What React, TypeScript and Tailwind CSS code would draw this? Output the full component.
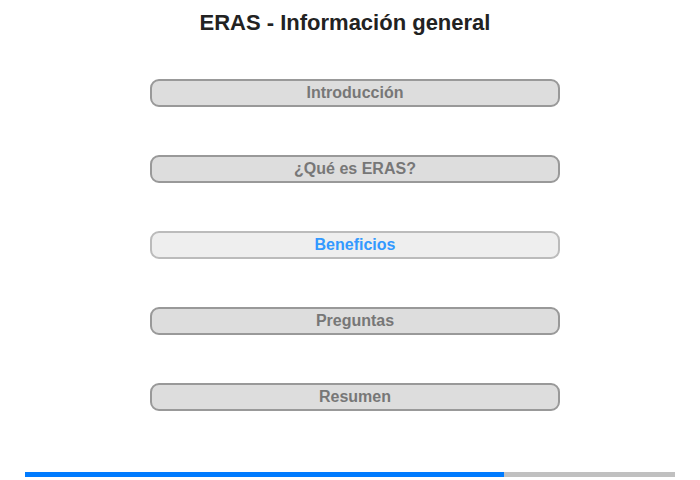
import React from "react";

const sections = [
  { label: "Introducción", active: false },
  { label: "¿Qué es ERAS?", active: false },
  { label: "Beneficios", active: true },
  { label: "Preguntas", active: false },
  { label: "Resumen", active: false },
];

export default function App() {
  return (
    <div className="w-[700px] h-[480px] bg-white font-['Liberation_Sans',Arial,sans-serif] flex flex-col">
      <h1 className="pt-[9px] pr-[10px] text-center text-[22px] leading-[28px] font-bold text-[#222]">
        ERAS - Información general
      </h1>

      <div className="mt-[42px] ml-[150px] w-[410px] flex flex-col gap-[48px]">
        {sections.map((s) => (
          <button
            key={s.label}
            className={
              s.active
                ? "h-[28px] rounded-[9px] border-2 border-[#bbbbbb] bg-[#eeeeee] text-[#3399ff] text-[16px] font-bold leading-none"
                : "h-[28px] rounded-[9px] border-2 border-[#999999] bg-[#dddddd] text-[#777777] text-[16px] font-bold leading-none"
            }
          >
            {s.label}
          </button>
        ))}
      </div>

      <div className="mt-auto mb-[3px] mx-[25px] h-[5px] bg-[#c0c0c0] flex">
        <div className="h-full bg-[#007bff]" style={{ width: `${(479 / 650) * 100}%` }} />
      </div>
    </div>
  );
}
